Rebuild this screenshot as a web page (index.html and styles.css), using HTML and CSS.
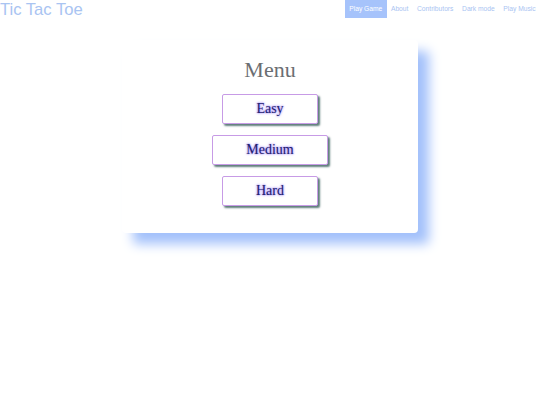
FILE: index.html
```html
<!DOCTYPE html>
<html>
<head>
<meta charset="utf-8">
<link rel="stylesheet" href="styles.css">
</head>
<body>
<header class="topbar">
  <div class="brand">Tic Tac Toe</div>
  <nav class="nav">
    <a class="nav-link active">Play Game</a>
    <a class="nav-link">About</a>
    <a class="nav-link">Contributors</a>
    <a class="nav-link">Dark mode</a>
    <a class="nav-link">Play Music</a>
  </nav>
</header>
<main class="stage">
  <section class="card">
    <h2 class="card-title">Menu</h2>
    <div class="menu">
      <button class="menu-btn">Easy</button>
      <button class="menu-btn">Medium</button>
      <button class="menu-btn">Hard</button>
    </div>
  </section>
</main>
</body>
</html>
```
FILE: styles.css
```css
html, body {
  margin: 0;
  padding: 0;
  background: #ffffff;
  min-height: 100%;
}
html {
  height: 100%;
}
body {
  font-family: "Liberation Sans", Arial, sans-serif;
}
.topbar {
  display: flex;
  justify-content: space-between;
  align-items: flex-start;
  height: 18px;
}
.brand {
  font-size: 16.6px;
  line-height: 20px;
  color: #a9c4f2;
}
.nav {
  display: flex;
}
.nav-link {
  font-size: 6.7px;
  line-height: 18px;
  padding: 0 4.3px;
  color: #a9c4f2;
  text-decoration: none;
}
.nav-link.active {
  background: #a6c3fb;
  color: #ffffff;
}
.stage {
  display: flex;
  justify-content: center;
  padding: 22px 0 30px;
}
.card {
  width: 296px;
  background: #ffffff;
  border-radius: 4px;
  box-shadow: 11px 11px 12px #a3c1fb;
  padding: 17px 0 27px;
  display: flex;
  flex-direction: column;
  align-items: center;
}
.card-title {
  margin: 0 0 11px;
  font-family: "Liberation Serif", "Times New Roman", serif;
  font-weight: normal;
  font-size: 22px;
  line-height: 26px;
  color: #6b6e72;
}
.menu {
  display: flex;
  flex-direction: column;
  align-items: center;
  gap: 11px;
}
.menu-btn {
  font-family: "Liberation Serif", "Times New Roman", serif;
  font-size: 14px;
  line-height: 18px;
  padding: 5px 33px 5px;
  background: #ffffff;
  color: #22226e;
  border: 1.5px solid #c79be6;
  border-radius: 2px;
  box-shadow: 2px 2px 2px #5e7d7a;
  text-shadow: 0 0 2px #8a6cf0, 0 0 3px #b9a6ff;
}
```
